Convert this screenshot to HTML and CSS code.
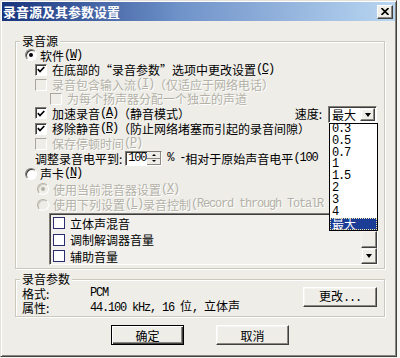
FILE: index.html
```html
<!DOCTYPE html>
<html lang="zh-CN">
<head>
  <meta charset="UTF-8" />
  <title>录音源及其参数设置</title>
  <link rel="stylesheet" href="styles.css">
</head>
<body>
  <div class="dialog">
    <div class="titlebar">
      <span class="title">录音源及其参数设置</span>
      <span class="close">
        <svg width="8" height="7" viewBox="0 0 8 7"><path d="M0.5 0 L7.5 7 M7.5 0 L0.5 7" stroke="#000" stroke-width="1.6"/></svg>
      </span>
    </div>

    <div class="content">
      <fieldset class="group source">
        <legend>录音源</legend>

        <div class="row h14"><span class="radio on"></span>软件 <span class="en">(<u>W</u>)</span></div>
        <div class="row lvl1"><span class="check on"><svg width="8" height="7" viewBox="0 0 8 7"><path d="M0.8 3.2 L3 5.5 L7.3 1" fill="none" stroke="#000" stroke-width="1.7"/></svg></span>在底部的“录音参数”选项中更改设置 <span class="en">(<u>C</u>)</span></div>
        <div class="row lvl1 off"><span class="check"></span>录音包含输入流 <span class="en">(<u>I</u>)</span> （仅适应于网络电话）</div>
        <div class="row lvl2 off h13"><span class="check"></span>为每个扬声器分配一个独立的声道</div>
        <div class="row lvl1 h16">
          <span class="check on"><svg width="8" height="7" viewBox="0 0 8 7"><path d="M0.8 3.2 L3 5.5 L7.3 1" fill="none" stroke="#000" stroke-width="1.7"/></svg></span>加速录音 <span class="en">(<u>A</u>)</span> （静音模式）
          <span class="speed">速度:</span>
          <div class="combo">
            <span class="combo-val">最大</span>
            <span class="drop-btn"><i class="arrow-down"></i></span>
            <ul class="droplist">
              <li class="en">0.3</li>
              <li class="en">0.5</li>
              <li class="en">0.7</li>
              <li class="en">1</li>
              <li class="en">1.5</li>
              <li class="en">2</li>
              <li class="en">3</li>
              <li class="en">4</li>
              <li class="selected">最大</li>
            </ul>
          </div>
        </div>
        <div class="row lvl1"><span class="check on"><svg width="8" height="7" viewBox="0 0 8 7"><path d="M0.8 3.2 L3 5.5 L7.3 1" fill="none" stroke="#000" stroke-width="1.7"/></svg></span>移除静音 <span class="en">(<u>R</u>)</span> （防止网络堵塞而引起的录音间隙）</div>
        <div class="row lvl1 off"><span class="check"></span>保存停顿时间 <span class="en">(<u>P</u>)</span></div>
        <div class="row lvl1 clip">调整录音电平到:<span class="spin"><span class="spin-val en">100</span><span class="spin-btns"><i class="spin-btn"><i class="arrow-up"></i></i><i class="spin-btn"><i class="arrow-down small"></i></i></span></span><span class="en">% - </span>相对于原始声音电平 <span class="en">(100</span></div>
        <div class="row"><span class="radio"></span>声卡 <span class="en">(<u>N</u>)</span></div>
        <div class="row sub off h16"><span class="radio on"></span>使用当前混音器设置 <span class="en">(<u>X</u>)</span></div>
        <div class="row sub off clip"><span class="radio"></span>使用下列设置 <span class="en">(<u>L</u>)</span> 录音控制 <span class="en">(Record through TotalR</span></div>

        <div class="listbox">
          <div class="list-items">
            <div class="list-item"><span class="box"></span>立体声混音</div>
            <div class="list-item"><span class="box"></span>调制解调器音量</div>
            <div class="list-item"><span class="box"></span>辅助音量</div>
          </div>
          <div class="scrollbar">
            <span class="sb-btn"><i class="arrow-up"></i></span>
            <span class="sb-thumb"></span>
            <span class="sb-btn"><i class="arrow-down"></i></span>
          </div>
        </div>
      </fieldset>

      <fieldset class="group params">
        <legend>录音参数</legend>
        <div class="params-body">
          <div class="params-info">
            <span>格式:</span><span class="en">PCM</span>
            <span>属性:</span><span><span class="en">44.100 kHz, 16 </span>位<span class="en">, </span>立体声</span>
          </div>
          <button class="btn change">更改<span class="en">...</span></button>
        </div>
      </fieldset>

      <div class="actions">
        <button class="btn default">确定</button>
        <button class="btn">取消</button>
      </div>
    </div>
  </div>
</body>
</html>
```

FILE: styles.css
```css
* {
  box-sizing: border-box;
}

html,
body {
  margin: 0;
}

body {
  background: #f6f6f3;
  font-family: "Noto Sans CJK SC", "Liberation Sans", sans-serif;
  font-size: 12px;
  line-height: 13px;
  color: #000;
}

.en {
  font-family: "Liberation Mono", "Noto Sans CJK SC", monospace;
  letter-spacing: -1.2px;
}

.dialog {
  width: 397px;
  height: 357px;
  padding: 1px;
  background: #eeede8;
  border: 1px solid;
  border-color: #e4e2da #404040 #404040 #e4e2da;
  box-shadow: inset 1px 1px #fff, inset -1px -1px #8a8880;
}

.titlebar {
  height: 19px;
  display: flex;
  align-items: center;
  justify-content: space-between;
  padding: 0 2px 0 1px;
  background: linear-gradient(to right, #17337c, #6f92c9 45%, #b9d6f1);
}

.title {
  color: #fff;
  font-weight: 700;
  font-size: 13px;
  line-height: 19px;
}

.close {
  width: 16px;
  height: 14px;
  display: flex;
  align-items: center;
  justify-content: center;
  background: #eeede8;
  border: 1px solid;
  border-color: #fff #404040 #404040 #fff;
  box-shadow: inset -1px -1px #8a8880;
}

.content {
  padding: 13px 10px 0 13px;
}

.group {
  margin: 0;
  min-width: 0;
  border: 1px solid #cbc9bd;
  box-shadow: inset 1px 1px #fff, 1px 1px #fff;
}

.group legend {
  padding: 0 2px;
  line-height: 14px;
  background: #eeede8;
}

.source {
  padding: 0 6px 3px 4px;
}

.row {
  display: flex;
  align-items: center;
  height: 15px;
  padding-left: 5px;
  white-space: nowrap;
}

.row.h13 { height: 13px; }
.row.h14 { height: 14px; }
.row.h16 { height: 16px; }

.lvl1 { padding-left: 15px; }
.lvl2 { padding-left: 30px; }
.sub { padding-left: 17px; }

/* rows whose end is hidden under the open speed list */
.clip {
  overflow: hidden;
  margin-right: 50px;
}

.off {
  color: #b3b1a7;
  text-shadow: 1px 1px #fff;
}

/* checkbox and radio, classic sunken look */
.check {
  width: 12px;
  height: 12px;
  margin-right: 5px;
  flex: none;
  display: flex;
  align-items: center;
  justify-content: center;
  background: #fff;
  border: 1px solid;
  border-color: #7e7c74 #fff #fff #7e7c74;
  box-shadow: inset 1px 1px #3c3c3c;
}

.off .check {
  background: #eeede8;
  border-color: #a9a79d #fff #fff #a9a79d;
  box-shadow: none;
}

.radio {
  width: 12px;
  height: 12px;
  margin-right: 3px;
  flex: none;
  position: relative;
  border-radius: 50%;
  background: #fff;
  border: 1px solid;
  border-color: #7e7c74 #fff #fff #7e7c74;
  box-shadow: inset 1px 1px #3c3c3c;
}

.radio.on::after {
  content: "";
  position: absolute;
  left: 3px;
  top: 3px;
  width: 4px;
  height: 4px;
  border-radius: 50%;
  background: #000;
}

.sub .radio {
  margin-right: 4px;
  background: #eeede8;
  border-color: #b3b1a7 #fff #fff #b3b1a7;
  box-shadow: inset 1px 1px #cfcdc4;
}

.sub .radio.on::after {
  background: #b3b1a7;
}

/* speed combobox */
.speed {
  margin-left: auto;
  margin-right: 6px;
}

.combo {
  position: relative;
  align-self: flex-start;
  margin-top: 1px;
  margin-right: 1px;
  width: 49px;
  height: 17px;
  display: flex;
  align-items: center;
  background: #fff;
  border: 1px solid;
  border-color: #7e7c74 #fff #fff #7e7c74;
  box-shadow: inset 1px 1px #3c3c3c;
}

.combo-val {
  padding-left: 3px;
  flex: 1;
}

.drop-btn,
.sb-btn {
  width: 15px;
  height: 13px;
  margin-right: 1px;
  display: flex;
  align-items: center;
  justify-content: center;
  background: #eeede8;
  border: 1px solid;
  border-color: #f4f3ef #404040 #404040 #f4f3ef;
  box-shadow: inset -1px -1px #8a8880, inset 1px 1px #fff;
}

.arrow-down,
.arrow-up {
  display: block;
  width: 0;
  height: 0;
  border-left: 3.5px solid transparent;
  border-right: 3.5px solid transparent;
}

.arrow-down { border-top: 4px solid #000; }
.arrow-up { border-bottom: 4px solid #000; }

.arrow-down.small,
.spin .arrow-up {
  border-left-width: 2px;
  border-right-width: 2px;
  border-top-width: 2px;
  border-bottom-width: 2px;
}

.droplist {
  position: absolute;
  left: 0;
  top: calc(100% + 1px);
  z-index: 2;
  width: 49px;
  margin: 0;
  padding: 0;
  list-style: none;
  background: #fff;
  border: 1px solid #000;
  text-shadow: none;
}

.droplist li {
  height: 11.8px;
  line-height: 11.8px;
  padding-left: 2px;
}

.droplist .selected {
  color: #fff;
  background: #1c3d95;
  outline: 1px dotted #f4e9a8;
  outline-offset: -1px;
}

/* level spin box */
.spin {
  display: inline-flex;
  width: 37px;
  height: 15px;
  margin: 0 5px 0 3px;
  background: #fff;
  border: 1px solid;
  border-color: #7e7c74 #fff #fff #7e7c74;
  box-shadow: inset 1px 1px #3c3c3c;
}

.spin-val {
  flex: 1;
  padding-left: 2px;
  line-height: 13px;
}

.spin-btns {
  width: 14px;
  display: flex;
  flex-direction: column;
}

.spin-btn {
  flex: 1;
  display: flex;
  align-items: center;
  justify-content: center;
  background: #eeede8;
  border-right: 1px solid #8a8880;
  border-bottom: 1px solid #8a8880;
}

/* mixer listbox */
.listbox {
  display: flex;
  height: 52px;
  margin: 1px 0 0 29px;
  background: #f1f0ec;
  border: 1px solid;
  border-color: #7e7c74 #fff #fff #7e7c74;
  box-shadow: inset 1px 1px #3c3c3c;
  overflow: hidden;
}

.list-items {
  flex: 1;
  padding: 1px 0 0 3px;
}

.list-item {
  display: flex;
  align-items: center;
  height: 16.5px;
}

.list-item .box {
  width: 12px;
  height: 12px;
  margin-right: 5px;
  background: #fff;
  border: 1px solid #2a2d6e;
}

.scrollbar {
  width: 16px;
  padding-top: 1px;
  display: flex;
  flex-direction: column;
  background: #f7f6f2;
}

.scrollbar .sb-btn {
  width: 16px;
  height: 16px;
  margin: 0;
}

.sb-thumb {
  flex: 1;
  background: #eeede8;
  border: 1px solid;
  border-color: #f4f3ef #404040 #404040 #f4f3ef;
  box-shadow: inset -1px -1px #8a8880;
}

/* recording parameters */
.params {
  margin-top: 3px;
  padding: 0 6px 2px 4px;
}

.params-body {
  display: flex;
  align-items: flex-start;
  padding-left: 2px;
}

.params-info {
  display: grid;
  grid-template-columns: 68px auto;
  grid-auto-rows: 14px;
  align-items: center;
  white-space: nowrap;
}

.btn {
  height: 20px;
  padding: 0;
  font: inherit;
  color: #000;
  background: #eeede8;
  border: 1px solid;
  border-color: #fff #404040 #404040 #fff;
  box-shadow: inset -1px -1px #8a8880, inset 1px 1px #f6f5f1;
}

.change {
  width: 74px;
  margin: 1px 1px 0 auto;
}

.actions {
  display: flex;
  justify-content: center;
  gap: 32px;
  margin-top: 8px;
}

.actions .btn {
  width: 73px;
}

.btn.default {
  border: 1px solid #000;
  box-shadow: inset 1px 1px #fff, inset -1px -1px #404040, inset -2px -2px #8a8880;
}
```
